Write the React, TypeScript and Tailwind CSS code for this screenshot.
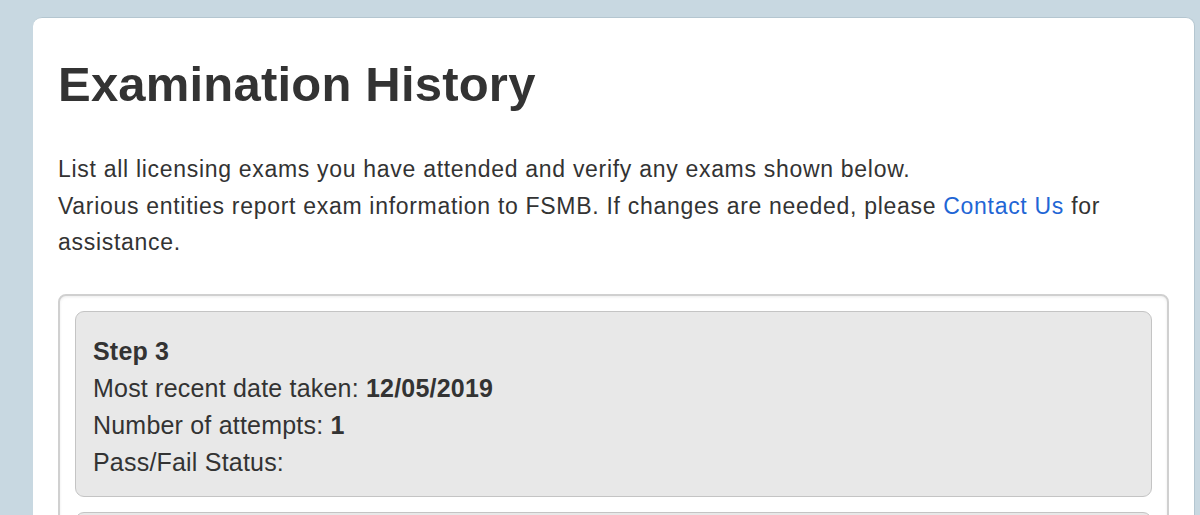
const exams = [
  { name: "Step 3", date: "12/05/2019", attempts: "1", status: "" },
  { name: "Step 2 CS", date: "08/14/2018", attempts: "1", status: "" },
];

function ExamCard({ exam }: { exam: (typeof exams)[number] }) {
  return (
    <div className="rounded-[9px] border border-[#c4c4c4] bg-[#e8e8e8] px-[17px] pt-[21px] pb-[15px] text-[25px] leading-[37px] tracking-[0.2px] text-[#333]">
      <div className="font-bold">{exam.name}</div>
      <div>
        Most recent date taken: <span className="font-bold">{exam.date}</span>
      </div>
      <div>
        Number of attempts: <span className="font-bold">{exam.attempts}</span>
      </div>
      <div>Pass/Fail Status: {exam.status}</div>
    </div>
  );
}

export default function App() {
  return (
    <div
      className="h-[515px] overflow-hidden bg-[#c8d8e1] pl-[33px] pr-[5px] pt-[17px]"
      style={{ fontFamily: '"Liberation Sans", Arial, sans-serif' }}
    >
      <div className="rounded-t-[9px] border-t border-r border-[#b4c6d0] bg-white px-[25px] pt-[40px] pb-10 min-h-[600px]">
        <h1 className="text-[49px] font-bold leading-[53px] tracking-[0.2px] text-[#333]">
          Examination History
        </h1>

        <div className="mt-[40px] text-[23px] leading-[36.5px] tracking-[0.7px] text-[#333]">
          <p>
            List all licensing exams you have attended and verify any exams
            shown below.
          </p>
          <p>
            Various entities report exam information to FSMB. If changes are
            needed, please{" "}
            <a href="#" className="text-[#1f66d5]">
              Contact Us
            </a>{" "}
            for assistance.
          </p>
        </div>

        <div className="mt-[33px] rounded-[8px] border-2 border-[#d0d0d0] p-[15px] shadow-[inset_0_1px_3px_rgba(0,0,0,0.08)]">
          <div className="flex flex-col gap-[15px]">
            {exams.map((exam) => (
              <ExamCard key={exam.name} exam={exam} />
            ))}
          </div>
        </div>
      </div>
    </div>
  );
}
